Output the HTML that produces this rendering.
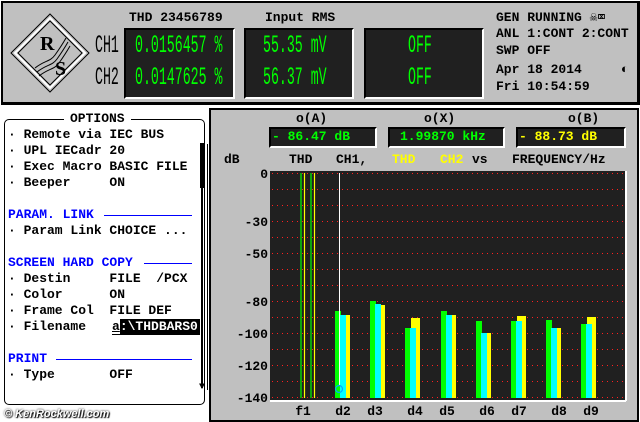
<!DOCTYPE html>
<html><head><style>
*{margin:0;padding:0}
body{width:640px;height:422px;background:#fff;position:relative;overflow:hidden;font-family:"Liberation Mono",monospace;font-weight:bold;font-size:13px;color:#000}
.a{position:absolute;white-space:pre;line-height:16px}
.box{position:absolute;background:#202020;border-top:2px solid #000;border-left:2px solid #000;border-right:2px solid #fff;border-bottom:2px solid #fff}
.big{position:absolute;white-space:pre;font-family:"Liberation Mono",monospace;font-weight:normal;font-size:25px;line-height:25px;transform:scaleX(0.53);transform-origin:0 0}
.g{color:#00ff00}.b{color:#0000ff}.y{color:#ffff00}
</style></head><body>
<div style="position:absolute;left:1px;top:1px;width:634px;height:99px;background:#c0c0c0;border:2px solid #000;border-right:3px solid #000;border-bottom:3px solid #000"></div>
<svg style="position:absolute;left:0;top:0" width="100" height="105">
<polygon points="50,14 89,53 50,92 11,53" fill="#c0c0c0" stroke="#000" stroke-width="1"/>
<polygon points="50,18 85,53 50,88 15,53" fill="none" stroke="#fff" stroke-width="2"/>
<polygon points="50,21 82,53 50,85 18,53" fill="none" stroke="#000" stroke-width="1"/>
<text x="40" y="50" font-family="Liberation Serif" font-size="20">R</text>
<text x="55" y="75" font-family="Liberation Serif" font-size="20">S</text>
<path d="M35,68 C45,60 50,62 55,55 S62,45 66,38 M37,72 C47,64 52,66 57,59 S64,49 68,42 M39,76 C49,68 54,70 59,63 S66,53 70,46" fill="none" stroke="#000" stroke-width="1"/>
</svg>
<div class="big" style="left:95px;top:33px">CH1</div>
<div class="big" style="left:95px;top:65px">CH2</div>
<div class="a" style="left:129px;top:10px">THD 23456789</div>
<div class="a" style="left:265px;top:10px">Input RMS</div>
<div class="box" style="left:124px;top:28px;width:107px;height:67px"></div>
<div class="box" style="left:244px;top:28px;width:106px;height:67px"></div>
<div class="box" style="left:364px;top:28px;width:116px;height:67px"></div>
<div class="big g" style="left:135px;top:33px">0.0156457 %</div>
<div class="big g" style="left:135px;top:65px">0.0147625 %</div>
<div class="big g" style="left:263px;top:33px">55.35 mV</div>
<div class="big g" style="left:263px;top:65px">56.37 mV</div>
<div class="big g" style="left:408px;top:33px">OFF</div>
<div class="big g" style="left:408px;top:65px">OFF</div>
<div class="a" style="left:496px;top:10px">GEN RUNNING &#9760;&#8999;</div>
<div class="a" style="left:496px;top:26px">ANL 1:CONT 2:CONT</div>
<div class="a" style="left:496px;top:43px">SWP OFF</div>
<div class="a" style="left:496px;top:62px">Apr 18 2014     &#9680;</div>
<div class="a" style="left:496px;top:79px">Fri 10:54:59</div>

<div style="position:absolute;left:4px;top:119px;width:199px;height:284px;border:1px solid #000;border-radius:5px"></div>
<div class="a" style="left:64px;top:111px;background:#fff;padding:0 6px">OPTIONS</div>
<div style="position:absolute;left:201px;top:143px;width:2px;height:245px;background:#000"></div>
<div style="position:absolute;left:200px;top:143px;width:4px;height:45px;background:#000"></div>
<div class="a" style="left:199px;top:380px;font-size:10px">&#9660;</div>
<div class="a" style="left:8px;top:127px">· Remote via IEC BUS
· UPL IECadr 20
· Exec Macro BASIC FILE
· Beeper     ON</div>
<div class="a b" style="left:8px;top:207px">PARAM. LINK</div>
<div style="position:absolute;left:104px;top:215px;width:88px;height:1px;background:#00f"></div>
<div class="a" style="left:8px;top:223px">· Param Link CHOICE ...</div>
<div class="a b" style="left:8px;top:255px">SCREEN HARD COPY</div>
<div style="position:absolute;left:144px;top:263px;width:48px;height:1px;background:#00f"></div>
<div class="a" style="left:8px;top:271px">· Destin     FILE  /PCX
· Color      ON
· Frame Col  FILE DEF
· Filename   </div>
<div class="a" style="left:112px;top:319px;background:#000;color:#fff;width:88px"><span style="background:#fff;color:#000;text-decoration:underline">a</span>:\THDBARS0</div>
<div class="a b" style="left:8px;top:351px">PRINT</div>
<div style="position:absolute;left:56px;top:359px;width:136px;height:1px;background:#00f"></div>
<div class="a" style="left:8px;top:367px">· Type       OFF</div>
<div class="a" style="left:4px;top:406px;font-family:'Liberation Sans';font-style:italic;font-size:11px;color:#fff;text-shadow:0 0 2px #000,1px 1px 1px #000">© KenRockwell.com</div>

<div style="position:absolute;left:207px;top:144px;width:1px;height:246px;background:#000"></div>
<div style="position:absolute;left:209px;top:108px;width:426px;height:310px;background:#c0c0c0;border:2px solid #000"></div>
<div class="a" style="left:296px;top:111px">o(A)</div>
<div class="a" style="left:424px;top:111px">o(X)</div>
<div class="a" style="left:568px;top:111px">o(B)</div>
<div class="box" style="left:269px;top:127px;width:104px;height:17px"></div>
<div class="box" style="left:388px;top:127px;width:113px;height:17px"></div>
<div class="box" style="left:516px;top:127px;width:106px;height:17px"></div>
<div class="a g" style="left:272px;top:129px">- 86.47 dB</div>
<div class="a g" style="left:400px;top:129px">1.99870 kHz</div>
<div class="a y" style="left:519px;top:129px">- 88.73 dB</div>
<div class="a" style="left:224px;top:152px">dB</div>
<div class="a" style="left:289px;top:152px">THD</div>
<div class="a" style="left:336px;top:152px">CH1,</div>
<div class="a y" style="left:392px;top:152px">THD</div>
<div class="a y" style="left:440px;top:152px">CH2</div>
<div class="a" style="left:472px;top:152px">vs</div>
<div class="a" style="left:512px;top:152px">FREQUENCY/Hz</div>
<svg style="position:absolute;left:0;top:0" width="640" height="422">
<rect x="270" y="171" width="355" height="229" fill="#202020"/>
<line x1="626" y1="171" x2="626" y2="401" stroke="#fff" stroke-width="2"/>
<line x1="270" y1="401" x2="626" y2="401" stroke="#fff" stroke-width="2"/>
<g stroke="#ff2020" stroke-width="1" stroke-dasharray="1,4">
<line x1="272" y1="173.5" x2="624" y2="173.5"/><line x1="272" y1="189.5" x2="624" y2="189.5"/><line x1="272" y1="205.5" x2="624" y2="205.5"/><line x1="272" y1="221.5" x2="624" y2="221.5"/><line x1="272" y1="237.5" x2="624" y2="237.5"/><line x1="272" y1="253.5" x2="624" y2="253.5"/><line x1="272" y1="269.5" x2="624" y2="269.5"/><line x1="272" y1="285.5" x2="624" y2="285.5"/><line x1="272" y1="301.5" x2="624" y2="301.5"/><line x1="272" y1="317.5" x2="624" y2="317.5"/><line x1="272" y1="333.5" x2="624" y2="333.5"/><line x1="272" y1="349.5" x2="624" y2="349.5"/><line x1="272" y1="365.5" x2="624" y2="365.5"/><line x1="272" y1="381.5" x2="624" y2="381.5"/><line x1="272" y1="397.5" x2="624" y2="397.5"/>
</g>
<g stroke-width="1.2">
<line x1="301" y1="173" x2="301" y2="398" stroke="#00ff00"/><line x1="304.5" y1="173" x2="304.5" y2="398" stroke="#ffff00"/>
<line x1="311" y1="173" x2="311" y2="398" stroke="#00ff00"/><line x1="314.5" y1="173" x2="314.5" y2="398" stroke="#ffff00"/>
</g>
<g>
<rect x="335" y="311" width="6" height="87" fill="#0f0"/><rect x="341" y="315" width="9" height="83" fill="#ff0"/><rect x="340" y="315" width="6" height="83" fill="#0ff"/>
<rect x="370" y="301" width="6" height="97" fill="#0f0"/><rect x="376" y="305" width="9" height="93" fill="#ff0"/><rect x="375" y="304" width="6" height="94" fill="#0ff"/>
<rect x="405" y="328" width="6" height="70" fill="#0f0"/><rect x="411" y="318" width="9" height="80" fill="#ff0"/><rect x="410" y="328" width="6" height="70" fill="#0ff"/>
<rect x="441" y="311" width="6" height="87" fill="#0f0"/><rect x="447" y="315" width="9" height="83" fill="#ff0"/><rect x="446" y="315" width="6" height="83" fill="#0ff"/>
<rect x="476" y="321" width="6" height="77" fill="#0f0"/><rect x="482" y="333" width="9" height="65" fill="#ff0"/><rect x="481" y="333" width="6" height="65" fill="#0ff"/>
<rect x="511" y="321" width="6" height="77" fill="#0f0"/><rect x="517" y="316" width="9" height="82" fill="#ff0"/><rect x="516" y="321" width="6" height="77" fill="#0ff"/>
<rect x="546" y="320" width="6" height="78" fill="#0f0"/><rect x="552" y="328" width="9" height="70" fill="#ff0"/><rect x="551" y="328" width="6" height="70" fill="#0ff"/>
<rect x="581" y="324" width="6" height="74" fill="#0f0"/><rect x="587" y="317" width="9" height="81" fill="#ff0"/><rect x="586" y="324" width="6" height="74" fill="#0ff"/>
</g>
<line x1="339.5" y1="173" x2="339.5" y2="386" stroke="#fff" stroke-width="1"/>
<circle cx="339" cy="389" r="3.5" fill="none" stroke="#0af" stroke-width="1.2"/>
<g font-family="Liberation Mono" font-weight="bold" font-size="13" text-anchor="end">
<text x="268" y="178">0</text><text x="268" y="226">-30</text><text x="268" y="258">-50</text><text x="268" y="306">-80</text><text x="268" y="338">-100</text><text x="268" y="370">-120</text><text x="268" y="402">-140</text>
</g>
<g font-family="Liberation Mono" font-weight="bold" font-size="13" text-anchor="middle">
<text x="303" y="415">f1</text><text x="343" y="415">d2</text><text x="375" y="415">d3</text><text x="415" y="415">d4</text><text x="447" y="415">d5</text><text x="487" y="415">d6</text><text x="519" y="415">d7</text><text x="559" y="415">d8</text><text x="591" y="415">d9</text>
</g>
</svg>
</body></html>
